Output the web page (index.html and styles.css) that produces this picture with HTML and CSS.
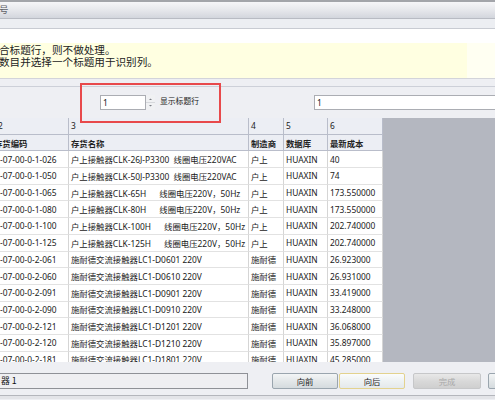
FILE: index.html
```html
<!DOCTYPE html>
<html>
<head>
<meta charset="utf-8">
<link rel="stylesheet" href="styles.css">
</head>
<body>
<div class="titlebar">号</div>
<div class="band"></div>
<div class="whiteband"></div>
<div class="notice">
  <div>合标题行，则不做处理。</div>
  <div>数目并选择一个标题用于识别列。</div>
</div>
<div class="opts-top"></div>
<div class="opts">
  <div class="spinner">
    <div class="spin-input">1</div>
    <div class="spin-btns">
      <svg width="9" height="15" viewBox="0 0 9 15">
        <rect x="0" y="0" width="9" height="15" fill="#f0f1f3"/>
        <line x1="0" y1="7.5" x2="9" y2="7.5" stroke="#d6d8dc" stroke-width="1"/>
        <path d="M3 5 L4.5 3.5 L6 5 Z" fill="#7b7f86"/>
        <path d="M3 10 L4.5 11.5 L6 10 Z" fill="#7b7f86"/>
      </svg>
    </div>
  </div>
  <div class="spin-label">显示标题行</div>
  <div class="right-input">1</div>
</div>
<div class="grid-wrap">
  <div class="grid">
    <div class="hc first-h">2</div><div class="hc">3</div><div class="hc">4</div><div class="hc">5</div><div class="hc">6</div>
    <div class="hc bold first-hn">存货编码</div><div class="hc bold">存货名称</div><div class="hc bold">制造商</div><div class="hc bold">数据库</div><div class="hc bold">最新成本</div>

    <div class="dc first">-07-00-0-1-026</div><div class="dc">户上接触器CLK-26J-P3300  线圈电压220VAC</div><div class="dc">户上</div><div class="dc">HUAXIN</div><div class="dc">40</div>
    <div class="dc first">-07-00-0-1-050</div><div class="dc">户上接触器CLK-50J-P3300  线圈电压220VAC</div><div class="dc">户上</div><div class="dc">HUAXIN</div><div class="dc">74</div>
    <div class="dc first">-07-00-0-1-065</div><div class="dc">户上接触器CLK-65H      线圈电压220V，50Hz</div><div class="dc">户上</div><div class="dc">HUAXIN</div><div class="dc">173.550000</div>
    <div class="dc first">-07-00-0-1-080</div><div class="dc">户上接触器CLK-80H      线圈电压220V，50Hz</div><div class="dc">户上</div><div class="dc">HUAXIN</div><div class="dc">173.550000</div>
    <div class="dc first">-07-00-0-1-100</div><div class="dc">户上接触器CLK-100H      线圈电压220V，50Hz</div><div class="dc">户上</div><div class="dc">HUAXIN</div><div class="dc">202.740000</div>
    <div class="dc first">-07-00-0-1-125</div><div class="dc">户上接触器CLK-125H      线圈电压220V，50Hz</div><div class="dc">户上</div><div class="dc">HUAXIN</div><div class="dc">202.740000</div>
    <div class="dc first">-07-00-0-2-061</div><div class="dc">施耐德交流接触器LC1-D0601 220V</div><div class="dc">施耐德</div><div class="dc">HUAXIN</div><div class="dc">26.923000</div>
    <div class="dc first">-07-00-0-2-060</div><div class="dc">施耐德交流接触器LC1-D0610 220V</div><div class="dc">施耐德</div><div class="dc">HUAXIN</div><div class="dc">26.931000</div>
    <div class="dc first">-07-00-0-2-091</div><div class="dc">施耐德交流接触器LC1-D0901 220V</div><div class="dc">施耐德</div><div class="dc">HUAXIN</div><div class="dc">33.419000</div>
    <div class="dc first">-07-00-0-2-090</div><div class="dc">施耐德交流接触器LC1-D0910 220V</div><div class="dc">施耐德</div><div class="dc">HUAXIN</div><div class="dc">33.248000</div>
    <div class="dc first">-07-00-0-2-121</div><div class="dc">施耐德交流接触器LC1-D1201 220V</div><div class="dc">施耐德</div><div class="dc">HUAXIN</div><div class="dc">36.068000</div>
    <div class="dc first">-07-00-0-2-120</div><div class="dc">施耐德交流接触器LC1-D1210 220V</div><div class="dc">施耐德</div><div class="dc">HUAXIN</div><div class="dc">35.897000</div>
    <div class="dc first">-07-00-0-2-181</div><div class="dc">施耐德交流接触器LC1-D1801 220V</div><div class="dc">施耐德</div><div class="dc">HUAXIN</div><div class="dc">45.285000</div>
  </div>
</div>
<div class="bottombar">
  <div class="status">器 1</div>
  <div class="btn btn-prev">向前</div>
  <div class="btn btn-next">向后</div>
  <div class="btn btn-done">完成</div>
  <div class="btn btn-extra"></div>
</div>
<div class="footer-strip"></div>
<div class="redbox"></div>
</body>
</html>
```

FILE: styles.css
```css
html, body {
  margin: 0;
  padding: 0;
}
body {
  width: 495px;
  height: 400px;
  overflow: hidden;
  position: relative;
  background: #eeeff3;
  font-family: "Noto Sans", "Noto Sans CJK SC", sans-serif;
  color: #1c1c1c;
}
.titlebar {
  height: 16px;
  border-top: 2px solid #a3a5aa;
  border-bottom: 1px solid #b8bbc3;
  background: linear-gradient(#f6f6f8, #e8e9ed 45%, #d3d6dd);
  font-size: 9.5px;
  line-height: 16px;
  color: #5e6066;
  text-indent: -1px;
}
.band {
  height: 9px;
  background: #eceef2;
  border-bottom: 1px solid #c8cbd2;
}
.whiteband {
  height: 14px;
  background: #ffffff;
}
.notice {
  height: 34px;
  padding-top: 1px;
  background: linear-gradient(90deg, #ffffe1 0, #ffffe1 467px, #fffff2 467px);
  border-bottom: 1px solid #d3d4da;
  font-family: "Noto Sans CJK SC", sans-serif;
  font-size: 10.6px;
  line-height: 12px;
  color: #222;
  text-indent: -1px;
}
.opts-top {
  height: 7px;
  border-bottom: 1px solid #cdd0d8;
}
.opts {
  height: 31px;
  display: flex;
  align-items: center;
}
.spinner {
  margin-left: 100px;
  display: flex;
  height: 15px;
  flex-shrink: 0;
}
.spin-input {
  width: 42px;
  height: 13px;
  border: 1px solid #abadb3;
  background: #fff;
  font-size: 8.5px;
  line-height: 13px;
  padding-left: 2px;
}
.spin-btns {
  width: 9px;
  height: 15px;
  display: flex;
}
.spin-label {
  margin-left: 5px;
  font-family: "Noto Sans CJK SC", sans-serif;
  font-size: 7.8px;
  color: #222;
  margin-top: -4px;
  flex-shrink: 0;
}
.right-input {
  margin-left: auto;
  width: 178px;
  height: 13px;
  border: 1px solid #abadb3;
  border-right: none;
  background: #fff;
  font-size: 8.5px;
  line-height: 13px;
  padding-left: 2px;
  flex-shrink: 0;
}
.grid-wrap {
  height: 244px;
  overflow: hidden;
  background: #b4b7c0;
}
.grid {
  display: grid;
  grid-template-columns: 69px 180px 35px 44px 55px;
  grid-auto-rows: 16.7px;
  width: 383px;
  font-size: 8.4px;
}
.hc, .dc {
  box-sizing: border-box;
  display: flex;
  align-items: center;
  padding-left: 2px;
  white-space: pre;
}
.hc {
  background: #eceef4;
  border-right: 1px solid #b9bdca;
  border-bottom: 1px solid #b9bdca;
  color: #222;
}
.hc.bold {
  font-weight: bold;
  font-family: "Noto Sans CJK SC", sans-serif;
}
.first-h {
  padding-left: 0;
  text-indent: -2px;
}
.first-hn {
  padding-left: 0;
  text-indent: -6px;
}
.dc {
  background: #ffffff;
  border-right: 1px solid #d5d5d5;
  border-bottom: 1px solid #e2e2e2;
  color: #1a1a1a;
}
.dc.first {
  padding-left: 0;
}
.bottombar {
  height: 34px;
  box-sizing: border-box;
  padding-top: 11px;
  display: flex;
  align-items: flex-start;
  border-bottom: 1px solid #b4b6bc;
  background: #eeeff3;
}
.bottombar > div {
  flex-shrink: 0;
}
.status {
  margin-left: -2px;
  width: 250px;
  height: 16px;
  box-sizing: border-box;
  border: 1px solid #8f9197;
  background: #efeff2;
  font-size: 8.8px;
  line-height: 14px;
  padding-left: 2px;
  color: #111;
  font-family: "Noto Sans CJK SC", sans-serif;
}
.btn {
  height: 16px;
  box-sizing: border-box;
  border: 1px solid #9aa5ae;
  border-radius: 2px;
  background: linear-gradient(#f3f5f6, #e3e7e9 50%, #d5dbde);
  font-family: "Noto Sans CJK SC", sans-serif;
  font-size: 8.3px;
  line-height: 14px;
  text-align: center;
  color: #222;
}
.btn-prev {
  margin-left: 24px;
  width: 66px;
}
.btn-next {
  margin-left: 1px;
  width: 66px;
  border-color: #e3d28e;
  background: linear-gradient(#fbfcfc, #eef2f3 50%, #e4e9eb);
}
.btn-done {
  margin-left: 8px;
  width: 68px;
  border-color: #c6c7c9;
  background: linear-gradient(#e8e8e8, #d9d9d9 50%, #cfcfcf);
  color: #a8a8a8;
}
.btn-extra {
  margin-left: 7px;
  width: 30px;
}
.footer-strip {
  height: 3px;
  background: #e3e4e8;
}
.redbox {
  position: absolute;
  left: 80px;
  top: 83px;
  width: 141px;
  height: 40px;
  box-sizing: border-box;
  border: 2px solid #e8494b;
}
```
